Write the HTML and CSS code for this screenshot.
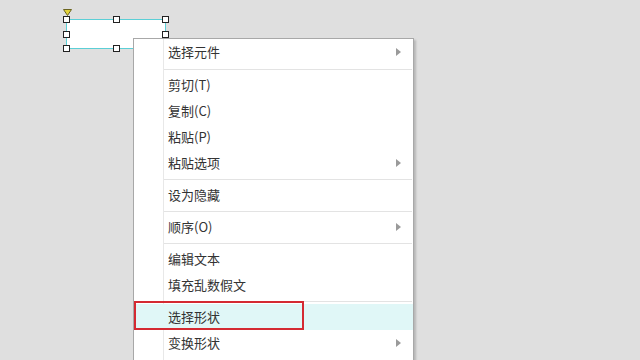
FILE: index.html
```html
<!DOCTYPE html>
<html lang="zh-CN">
<head>
  <meta charset="UTF-8" />
  <meta name="viewport" content="width=device-width, initial-scale=1.0" />
  <title>Canvas</title>
  <link rel="stylesheet" href="styles.css">
</head>
<body>
  <div class="canvas">
    <div class="shape">
      <svg class="anchor" width="9" height="7" viewBox="0 0 9 7">
        <path d="M0.5 0.5 H8.5 L4.5 6.5 Z" fill="#e3d33a" stroke="#6b6420" stroke-width="1"/>
      </svg>
      <span class="handle h-tl"></span>
      <span class="handle h-tm"></span>
      <span class="handle h-tr"></span>
      <span class="handle h-ml"></span>
      <span class="handle h-mr"></span>
      <span class="handle h-bl"></span>
      <span class="handle h-bm"></span>
      <span class="handle h-br"></span>
    </div>

    <ul class="menu">
      <li class="item sub first">选择元件</li>
      <li class="sep"></li>
      <li class="item">剪切(T)</li>
      <li class="item">复制(C)</li>
      <li class="item">粘贴(P)</li>
      <li class="item sub">粘贴选项</li>
      <li class="sep"></li>
      <li class="item">设为隐藏</li>
      <li class="sep"></li>
      <li class="item sub">顺序(O)</li>
      <li class="sep"></li>
      <li class="item">编辑文本</li>
      <li class="item">填充乱数假文</li>
      <li class="sep"></li>
      <li class="item active">选择形状</li>
      <li class="item sub">变换形状</li>
    </ul>

    <div class="callout"></div>
  </div>
</body>
</html>
```

FILE: styles.css
```css
html, body {
  margin: 0;
  padding: 0;
}
body {
  width: 640px;
  height: 360px;
  overflow: hidden;
  background: #dfdfdf;
  font-family: "Microsoft YaHei", "Noto Sans CJK SC", sans-serif;
}
.canvas {
  position: relative;
  width: 640px;
  height: 360px;
}

/* selected rectangle */
.shape {
  position: absolute;
  left: 66px;
  top: 19px;
  width: 98px;
  height: 28px;
  background: #fff;
  border: 1px solid #5ccfd6;
}
.handle {
  position: absolute;
  width: 5px;
  height: 5px;
  background: #fff;
  border: 1px solid #222;
}
.h-tl { left: -4px; top: -4px; }
.h-tm { left: 46px; top: -4px; }
.h-tr { left: 95px; top: -4px; }
.h-ml { left: -4px; top: 11px; }
.h-mr { left: 95px; top: 11px; }
.h-bl { left: -4px; top: 25px; }
.h-bm { left: 46px; top: 25px; }
.h-br { left: 95px; top: 25px; }
.anchor {
  position: absolute;
  left: -4px;
  top: -11px;
  display: block;
}

/* context menu */
.menu {
  position: absolute;
  left: 133px;
  top: 38px;
  width: 279px;
  margin: 0;
  padding: 0 0 20px;
  list-style: none;
  background: #fff;
  border: 1px solid #a8a8a8;
  box-shadow: 2px 2px 2px rgba(0, 0, 0, 0.18);
  background-image: linear-gradient(#e8e8e8, #e8e8e8);
  background-size: 1px 100%;
  background-position: 29px 0;
  background-repeat: no-repeat;
}
.item {
  position: relative;
  height: 26px;
  line-height: 25px;
  padding-left: 34px;
  font-size: 13px;
  color: #333;
}
.item.first {
  height: 27px;
  line-height: 26px;
}
.item.sub::after {
  content: "";
  position: absolute;
  right: 12px;
  top: 9px;
  border-top: 4px solid transparent;
  border-bottom: 4px solid transparent;
  border-left: 5px solid #9a9a9a;
}
.item.active {
  background: #e0f7f7;
}
.sep {
  height: 1px;
  margin: 3px 1px 2px 30px;
  background: #e3e3e3;
}

/* red highlight frame */
.callout {
  position: absolute;
  left: 134px;
  top: 301px;
  width: 166px;
  height: 25px;
  border: 2px solid #d42a32;
}
```
